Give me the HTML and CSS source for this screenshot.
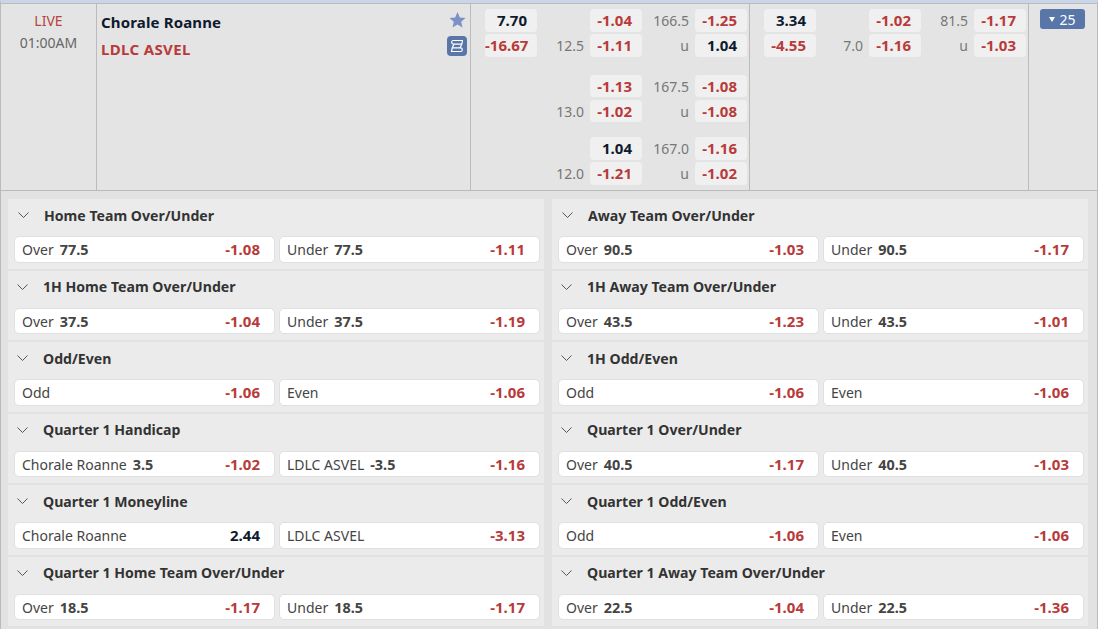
FILE: index.html
```html
<!DOCTYPE html>
<html lang="en">
<head>
<meta charset="utf-8">
<title>Chorale Roanne vs LDLC ASVEL</title>
<link rel="stylesheet" href="styles.css">
</head>
<body>
<div class="board">
  <section class="match">
    <div class="time"><div class="live">LIVE</div><div class="clock">01:00AM</div></div>
    <div class="teams">
      <div class="names"><div class="home">Chorale Roanne</div><div class="away">LDLC ASVEL</div></div>
      <div class="icons">
        <svg class="star" width="17" height="16" viewBox="0 0 17 16"><path d="M8.5 0l2.3 5.4 5.7.5-4.3 3.8 1.3 5.8-5-3-5 3 1.3-5.8L.5 5.9l5.7-.5z"/></svg>
        <svg class="stream" width="20" height="20" viewBox="0 0 20 20"><rect width="20" height="20" rx="4"/><path d="M6.500 4.500H15.500L14.800 8.200H6.500a1.850 1.850 0 0 1 0-3.700zM13.500 15.500H4.500L5.200 11.800H13.500a1.850 1.850 0 0 1 0 3.700zM7 8.200L5.200 11.800M14.800 8.200L13 11.800" fill="none" stroke="#fff" stroke-width="1.200" stroke-linejoin="round"/></svg>
      </div>
    </div>
    <div class="market">
      <div class="line">
        <div class="cell fav">7.70</div><div class="lab"></div><div class="cell">-1.04</div><div class="lab">166.5</div><div class="cell">-1.25</div>
        <div class="cell">-16.67</div><div class="lab">12.5</div><div class="cell">-1.11</div><div class="lab">u</div><div class="cell fav">1.04</div>
      </div>
      <div class="line second">
        <div></div><div class="lab"></div><div class="cell">-1.13</div><div class="lab">167.5</div><div class="cell">-1.08</div>
        <div></div><div class="lab">13.0</div><div class="cell">-1.02</div><div class="lab">u</div><div class="cell">-1.08</div>
      </div>
      <div class="line third">
        <div></div><div class="lab"></div><div class="cell fav">1.04</div><div class="lab">167.0</div><div class="cell">-1.16</div>
        <div></div><div class="lab">12.0</div><div class="cell">-1.21</div><div class="lab">u</div><div class="cell">-1.02</div>
      </div>
    </div>
    <div class="market">
      <div class="line">
        <div class="cell fav">3.34</div><div class="lab"></div><div class="cell">-1.02</div><div class="lab">81.5</div><div class="cell">-1.17</div>
        <div class="cell">-4.55</div><div class="lab">7.0</div><div class="cell">-1.16</div><div class="lab">u</div><div class="cell">-1.03</div>
      </div>
    </div>
    <div class="more"><div class="morebtn"><span class="tri"></span>25</div></div>
  </section>
  <section class="blocks">
    <div class="block"><h3><svg class="chev" width="11" height="6" viewBox="0 0 11 6"><path d="M.5.5l5 5 5-5"/></svg>Home Team Over/Under</h3><div class="bets">
      <div class="bet"><span class="k">Over</span><b class="v">77.5</b><span class="o">-1.08</span></div><div class="bet"><span class="k">Under</span><b class="v">77.5</b><span class="o">-1.11</span></div></div></div>
    <div class="block"><h3><svg class="chev" width="11" height="6" viewBox="0 0 11 6"><path d="M.5.5l5 5 5-5"/></svg>Away Team Over/Under</h3><div class="bets">
      <div class="bet"><span class="k">Over</span><b class="v">90.5</b><span class="o">-1.03</span></div><div class="bet"><span class="k">Under</span><b class="v">90.5</b><span class="o">-1.17</span></div></div></div>
    <div class="block"><h3><svg class="chev" width="11" height="6" viewBox="0 0 11 6"><path d="M.5.5l5 5 5-5"/></svg>1H Home Team Over/Under</h3><div class="bets">
      <div class="bet"><span class="k">Over</span><b class="v">37.5</b><span class="o">-1.04</span></div><div class="bet"><span class="k">Under</span><b class="v">37.5</b><span class="o">-1.19</span></div></div></div>
    <div class="block"><h3><svg class="chev" width="11" height="6" viewBox="0 0 11 6"><path d="M.5.5l5 5 5-5"/></svg>1H Away Team Over/Under</h3><div class="bets">
      <div class="bet"><span class="k">Over</span><b class="v">43.5</b><span class="o">-1.23</span></div><div class="bet"><span class="k">Under</span><b class="v">43.5</b><span class="o">-1.01</span></div></div></div>
    <div class="block"><h3><svg class="chev" width="11" height="6" viewBox="0 0 11 6"><path d="M.5.5l5 5 5-5"/></svg>Odd/Even</h3><div class="bets">
      <div class="bet"><span class="k">Odd</span><span class="o">-1.06</span></div><div class="bet"><span class="k">Even</span><span class="o">-1.06</span></div></div></div>
    <div class="block"><h3><svg class="chev" width="11" height="6" viewBox="0 0 11 6"><path d="M.5.5l5 5 5-5"/></svg>1H Odd/Even</h3><div class="bets">
      <div class="bet"><span class="k">Odd</span><span class="o">-1.06</span></div><div class="bet"><span class="k">Even</span><span class="o">-1.06</span></div></div></div>
    <div class="block"><h3><svg class="chev" width="11" height="6" viewBox="0 0 11 6"><path d="M.5.5l5 5 5-5"/></svg>Quarter 1 Handicap</h3><div class="bets">
      <div class="bet"><span class="k">Chorale Roanne</span><b class="v">3.5</b><span class="o">-1.02</span></div><div class="bet"><span class="k">LDLC ASVEL</span><b class="v">-3.5</b><span class="o">-1.16</span></div></div></div>
    <div class="block"><h3><svg class="chev" width="11" height="6" viewBox="0 0 11 6"><path d="M.5.5l5 5 5-5"/></svg>Quarter 1 Over/Under</h3><div class="bets">
      <div class="bet"><span class="k">Over</span><b class="v">40.5</b><span class="o">-1.17</span></div><div class="bet"><span class="k">Under</span><b class="v">40.5</b><span class="o">-1.03</span></div></div></div>
    <div class="block"><h3><svg class="chev" width="11" height="6" viewBox="0 0 11 6"><path d="M.5.5l5 5 5-5"/></svg>Quarter 1 Moneyline</h3><div class="bets">
      <div class="bet"><span class="k">Chorale Roanne</span><span class="o pos">2.44</span></div><div class="bet"><span class="k">LDLC ASVEL</span><span class="o">-3.13</span></div></div></div>
    <div class="block"><h3><svg class="chev" width="11" height="6" viewBox="0 0 11 6"><path d="M.5.5l5 5 5-5"/></svg>Quarter 1 Odd/Even</h3><div class="bets">
      <div class="bet"><span class="k">Odd</span><span class="o">-1.06</span></div><div class="bet"><span class="k">Even</span><span class="o">-1.06</span></div></div></div>
    <div class="block"><h3><svg class="chev" width="11" height="6" viewBox="0 0 11 6"><path d="M.5.5l5 5 5-5"/></svg>Quarter 1 Home Team Over/Under</h3><div class="bets">
      <div class="bet"><span class="k">Over</span><b class="v">18.5</b><span class="o">-1.17</span></div><div class="bet"><span class="k">Under</span><b class="v">18.5</b><span class="o">-1.17</span></div></div></div>
    <div class="block"><h3><svg class="chev" width="11" height="6" viewBox="0 0 11 6"><path d="M.5.5l5 5 5-5"/></svg>Quarter 1 Away Team Over/Under</h3><div class="bets">
      <div class="bet"><span class="k">Over</span><b class="v">22.5</b><span class="o">-1.04</span></div><div class="bet"><span class="k">Under</span><b class="v">22.5</b><span class="o">-1.36</span></div></div></div>
  </section>
</div>
</body>
</html>
```
FILE: styles.css
```css
* { box-sizing: border-box; }
html, body { margin: 0; height: 629px; overflow: hidden; background: #fff; }
body { font-family: "Noto Sans", "Open Sans", sans-serif; font-size: 14px; color: #333; }
.board { width: 1098px; height: 629px; border-top: 3px solid #c9d6ea; background: #e2e2e2; border-right: 1px solid #bbb; border-left: 1px solid #bbb; }
.match { display: grid; grid-template-columns: 96px 374px 279px 279px 1fr; height: 188px; border-top: 1px solid #bbb; border-bottom: 1px solid #bbb; background: #e4e4e4; }
.time { border-right: 1px solid #bbb; text-align: center; padding-top: 6px; line-height: 22px; }
.live { color: #b5453f; }
.clock { color: #666; }
.teams { display: flex; justify-content: space-between; border-right: 1px solid #bbb; padding: 8px 3px 0 4px; }
.home { font-weight: 700; font-size: 15px; letter-spacing: .15px; line-height: 21px; color: #0e1a2e; }
.away { font-weight: 700; font-size: 15px; letter-spacing: .35px; line-height: 21px; color: #b83a3a; margin-top: 6px; }
.icons { display: flex; flex-direction: column; align-items: center; }
.star { fill: #7a93c4; margin-bottom: 8px; }
.stream { fill: #5876a8; }
.market { border-right: 1px solid #bbb; padding: 5px 0 0 14px; }
.line { display: grid; grid-template-columns: 52px 53px 52px 53px 52px; grid-template-rows: 23px 23px; row-gap: 2px; }
.second { margin-top: 18px; grid-template-rows: 22px 22px; row-gap: 3px; }
.third { margin-top: 15px; }
.cell { background: #f0f0f0; border-radius: 4px; text-align: right; padding-right: 10px; font-size: 15px; font-weight: 700; line-height: 22px; color: #b83a3a; }
.fav { color: #0e1a2e; }
.lab { text-align: right; padding-right: 6px; line-height: 23px; color: #777; }
.more { padding: 5px 0 0 11px; }
.morebtn { display: flex; align-items: center; justify-content: center; gap: 4px; width: 45px; height: 20px; background: #5876a8; color: #fff; border-radius: 3px; }
.tri { width: 0; height: 0; border-left: 3.500px solid transparent; border-right: 3.500px solid transparent; border-top: 5px solid #fff; }
.blocks { display: grid; grid-template-columns: 536px 536px; column-gap: 8px; row-gap: 2px; padding: 8px 0 0 7px; }
.block { height: 69.500px; background: #ebebeb; padding: 0 4px 0 6px; }
.block:nth-child(n+3) h3 { padding-left: 3px; }
h3 { display: flex; align-items: center; gap: 15px; height: 37px; margin: 0; padding: 0 0 5px 4px; font-size: 14.100px; font-weight: 700; color: #333; }
.chev { fill: none; stroke: #555; stroke-width: 1; flex: none; }
.bets { display: grid; grid-template-columns: 1fr 1fr; column-gap: 4px; }
.bet { display: flex; align-items: baseline; height: 26.500px; line-height: 24px; padding: 0 14px 0 7px; background: #fff; border: 1px solid #e0e0e0; border-radius: 5px; }
.k { color: #444; }
.v { margin-left: 6px; color: #444; font-size: 14.400px; font-weight: 700; }
.o { margin-left: auto; color: #b83a3a; font-size: 15px; font-weight: 700; }
.pos { color: #0e1a2e; }
```
